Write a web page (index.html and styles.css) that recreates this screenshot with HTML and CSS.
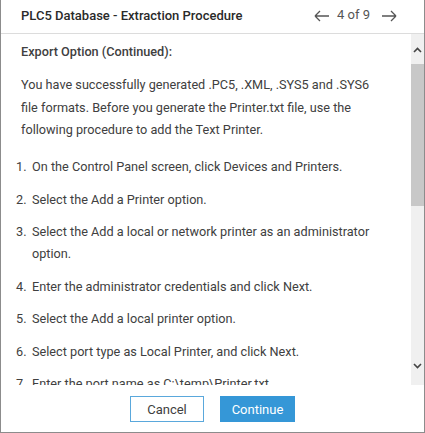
FILE: index.html
```html
<!DOCTYPE html>
<html>
<head>
<meta charset="utf-8">
<link rel="stylesheet" href="styles.css">
</head>
<body>
<div class="dialog">
  <header class="header">
    <div class="title">PLC5 Database - Extraction Procedure</div>
    <div class="nav">
      <svg class="arrow" width="16" height="12" viewBox="0 0 16 12"><path d="M1 6H15M1 6L6 1M1 6L6 11" fill="none" stroke="#555" stroke-width="1.3"/></svg>
      <span class="page">4 of 9</span>
      <svg class="arrow" width="16" height="12" viewBox="0 0 16 12"><path d="M1 6H15M15 6L10 1M15 6L10 11" fill="none" stroke="#555" stroke-width="1.3"/></svg>
    </div>
  </header>
  <div class="main">
    <div class="content">
      <h2 class="heading">Export Option (Continued):</h2>
      <p class="intro">You have successfully generated .PC5, .XML, .SYS5 and .SYS6 file formats. Before you generate the Printer.txt file, use the following procedure to add the Text Printer.</p>
      <ol class="steps">
        <li>On the Control Panel screen, click Devices and Printers.</li>
        <li>Select the Add a Printer option.</li>
        <li>Select the Add a local or network printer as an administrator option.</li>
        <li>Enter the administrator credentials and click Next.</li>
        <li>Select the Add a local printer option.</li>
        <li>Select port type as Local Printer, and click Next.</li>
        <li>Enter the port name as C:\temp\Printer.txt</li>
      </ol>
    </div>
    <div class="scrollbar">
      <div class="sb-btn sb-up"><svg width="9" height="6" viewBox="0 0 9 6"><path d="M1 5L4.5 1.5L8 5" fill="none" stroke="#444" stroke-width="1.6"/></svg></div>
      <div class="sb-thumb"></div>
      <div class="sb-space"></div>
      <div class="sb-btn sb-down"><svg width="9" height="6" viewBox="0 0 9 6"><path d="M1 1L4.5 4.5L8 1" fill="none" stroke="#444" stroke-width="1.6"/></svg></div>
    </div>
  </div>
  <footer class="footer">
    <button class="btn btn-cancel">Cancel</button>
    <button class="btn btn-continue">Continue</button>
  </footer>
</div>
</body>
</html>
```
FILE: styles.css
```css
html, body {
  margin: 0;
  padding: 0;
  background: #fff;
}
.dialog {
  width: 425px;
  height: 433px;
  box-sizing: border-box;
  border: 1px solid #8c8c8c;
  border-top: none;
  display: flex;
  flex-direction: column;
  font-family: Roboto, "Liberation Sans", sans-serif;
  color: #404040;
  overflow: hidden;
}
.header {
  height: 31px;
  flex: none;
  border-bottom: 1px solid #dcdcdc;
  display: flex;
  align-items: center;
  justify-content: space-between;
  padding: 0 27px 2px 20px;
}
.title {
  font-size: 13px;
  font-weight: 500;
  color: #2a2a2a;
}
.nav {
  display: flex;
  align-items: center;
  gap: 7px;
  color: #555;
  font-size: 13px;
}
.page {
  margin: 0 4px 2px 0;
}
.main {
  flex: 1;
  display: flex;
  min-height: 0;
}
.content {
  flex: 1;
  overflow: hidden;
  padding: 7px 35px 0 20px;
  font-size: 12.7px;
  line-height: 22px;
}
.heading {
  margin: 0 0 11px 0;
  font-size: 12.7px;
  font-weight: 500;
  color: #404040;
}
.intro {
  margin: 0 0 14.5px 0;
  line-height: 22.5px;
}
.steps {
  list-style: none;
  counter-reset: step;
  margin: 0 0 0 -5px;
  padding: 0;
}
.steps li {
  counter-increment: step;
  display: flex;
  margin-bottom: 10.5px;
}
.steps li::before {
  content: counter(step) ".";
  flex: none;
  width: 16px;
}
.scrollbar {
  width: 13px;
  flex: none;
  background: #f0f0f0;
  display: flex;
  flex-direction: column;
}
.sb-btn {
  display: flex;
  justify-content: center;
}
.sb-up {
  height: 30px;
  align-items: center;
  padding-top: 2px;
  box-sizing: border-box;
}
.sb-thumb {
  height: 142px;
  background: #c8c8c8;
}
.sb-space {
  flex: 1;
}
.sb-down {
  height: 36px;
  align-items: flex-start;
  padding-top: 14px;
  box-sizing: border-box;
}
.footer {
  flex: none;
  height: 47px;
  box-sizing: border-box;
  padding-top: 11px;
  display: flex;
  justify-content: center;
  align-items: flex-start;
  gap: 16px;
}
.btn {
  height: 26px;
  font-family: Roboto, "Liberation Sans", sans-serif;
  font-size: 13px;
  padding: 0;
  box-sizing: border-box;
  cursor: pointer;
}
.btn-cancel {
  width: 74px;
  background: #fff;
  border: 1px solid #5aa8dc;
  color: #404040;
}
.btn-continue {
  width: 75px;
  background: #3597d7;
  border: 1px solid #3597d7;
  color: #fff;
}
```
